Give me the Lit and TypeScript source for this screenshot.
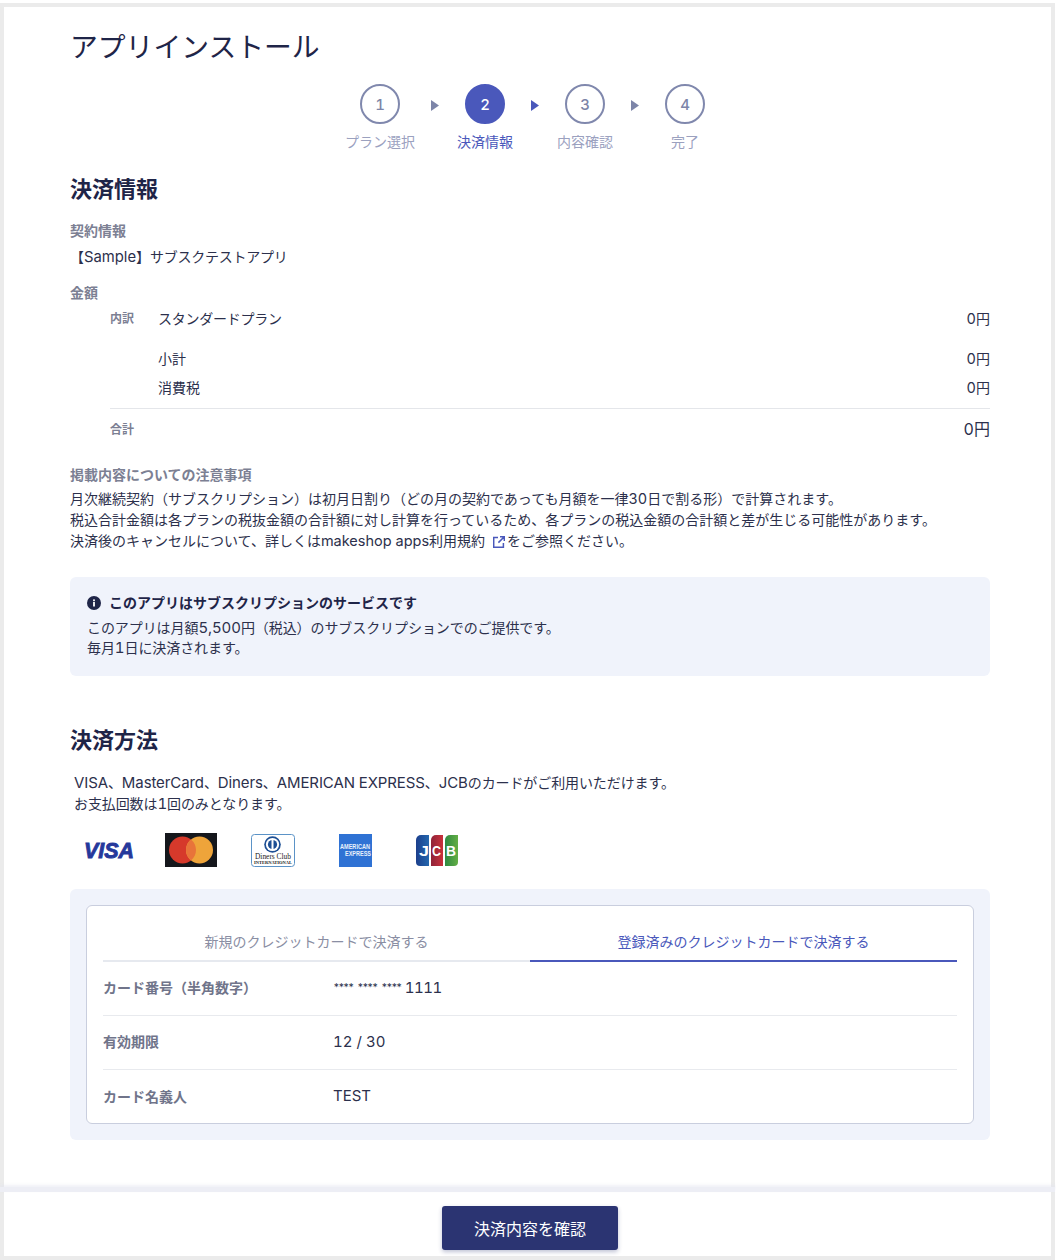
import { LitElement, html, css } from "lit";
import { customElement } from "lit/decorators.js";

const STEPS = [
  { n: "1", label: "プラン選択" },
  { n: "2", label: "決済情報", active: true },
  { n: "3", label: "内容確認" },
  { n: "4", label: "完了" },
];

@customElement("app-root")
export class AppRoot extends LitElement {
  static styles = css`
    :host {
      display: block;
      width: 1056px;
      height: 1260px;
      box-sizing: border-box;
      font-family: Inter, "Noto Sans CJK JP", sans-serif;
      font-variant-numeric: tabular-nums;
      color: #1f2548;
      background: #ffffff;
      overflow: hidden;
    }
    * { box-sizing: border-box; }
    .l { font-size: 15px; }
    .l-s { font-size: 14.5px; }
    .tight { letter-spacing: -.25px; }
    .frame {
      width: 1055px;
      height: 1257px;
      margin-top: 3px;
      border: 4px solid #ebebeb;
      display: flex;
      flex-direction: column;
      background: #fff;
    }
    .main { height: 1185px; padding: 0 61px 0 66px; }
    .foot {
      position: relative;
      height: 64px;
      display: flex;
      justify-content: center;
      padding: 14px 0 0 5px;
    }
    .foot::before {
      content: "";
      position: absolute;
      left: -4px;
      right: -4px;
      top: -5px;
      height: 5px;
      background: #edeef5;
      box-shadow: 0 -2px 3px rgba(225, 227, 240, .5);
    }
    .btn {
      width: 176px;
      height: 44px;
      border-radius: 3px;
      background: #2b3472;
      color: #fff;
      font-size: 16px;
      display: flex;
      align-items: center;
      justify-content: center;
      box-shadow: 0 2px 4px rgba(43, 52, 114, .3);
    }
    h1 {
      margin: 0;
      padding-top: 18px;
      font-size: 27.8px;
      line-height: 44px;
      font-weight: 400;
      color: #1f2548;
    }
    .steps {
      display: flex;
      justify-content: center;
      margin-top: 15px;
      height: 70px;
    }
    .step { width: 56px; display: flex; flex-direction: column; align-items: center; }
    .step.first { width: 66px; }
    .circle {
      width: 40px;
      height: 40px;
      flex: none;
      border-radius: 50%;
      border: 2px solid #8088ad;
      color: #7d85a8;
      font-size: 15px;
      font-weight: 500;
      display: flex;
      align-items: center;
      justify-content: center;
    }
    .step.on .circle { background: #4a58bb; border-color: #4a58bb; color: #fff; }
    .step-label { margin-top: 8px; font-size: 14px; line-height: 20px; color: #9ba1bf; white-space: nowrap; }
    .step.on .step-label { color: #4a58bb; }
    .arrow {
      width: 44px;
      display: flex;
      justify-content: center;
      padding-top: 16px;
    }
    .arrow svg { width: 8px; height: 11px; display: block; }
    h2 {
      margin: 0;
      font-size: 22px;
      line-height: 30px;
      font-weight: 700;
      color: #1f2548;
    }
    .h-first { margin-top: 20px; }
    .label { font-size: 14px; line-height: 20px; font-weight: 700; color: #7c8093; }
    .body { font-size: 14px; line-height: 21px; color: #2c304c; }
    .contract { margin-top: 17px; }
    .contract .body { margin-top: 5px; }
    .contract .l { font-size: 14.8px; }
    .amount { margin-top: 15px; }
    .rows { margin-left: 40px; }
    .row { display: flex; align-items: center; font-size: 14px; color: #2c304c; height: 29px; }
    .row .k { width: 48px; font-size: 12px; font-weight: 700; color: #7c8093; }
    .row .v { margin-left: auto; }
    .row .v .l { font-size: 14.5px; }
    .row.brk { margin-bottom: 11px; }
    .rule { border-top: 1px solid #e4e6ea; margin-top: 7px; }
    .row.total { height: 38px; }
    .row.total .v { font-size: 16px; }
    .row.total .v .l { font-size: 16px; }
    .note { margin-top: 18px; }
    .note .body { margin-top: 3px; }
    .ext { display: inline-block; width: 12px; height: 12px; vertical-align: -2px; margin: 0 2px 0 8px; }
    .info {
      margin-top: 26px;
      height: 99px;
      padding: 15px 17px;
      background: #f0f3fb;
      border-radius: 6px;
    }
    .info-t { display: flex; align-items: center; gap: 8px; font-size: 14px; line-height: 21px; font-weight: 700; color: #1f2548; }
    .info-t svg { width: 14px; height: 14px; display: block; }
    .info .body { line-height: 20px; margin-top: 5px; letter-spacing: -.08px; }
    .pay-h { margin-top: 49px; }
    .pay-t { margin-top: 18px; padding-left: 4px; font-size: 14px; line-height: 20.5px; color: #2c304c; letter-spacing: -.1px; }
    .brands { display: flex; align-items: center; margin-top: 18px; height: 36px; padding-left: 14px; }
    .brands svg { display: block; flex: none; overflow: visible; }
    .m-visa { margin-right: 25px; }
    .m-master { margin-right: 34px; }
    .m-diners { margin-right: 44px; }
    .m-amex { margin-right: 44px; }
    .panel {
      margin-top: 21px;
      padding: 16px;
      height: 251px;
      background: #f0f3fb;
      border-radius: 6px;
    }
    .card {
      height: 219px;
      background: #fff;
      border: 1px solid #c9cede;
      border-radius: 6px;
      padding: 16px 16px 0;
    }
    .tabs { display: grid; grid-template-columns: 1fr 1fr; }
    .tab {
      height: 40px;
      padding-top: 10px;
      text-align: center;
      font-size: 14px;
      line-height: 20px;
      color: #8a8ea3;
      border-bottom: 2px solid #e6e9ef;
    }
    .tab.on { color: #4a58bb; border-bottom-color: #4a58bb; }
    .crow {
      display: flex;
      align-items: center;
      height: 54px;
      padding-bottom: 3px;
      border-bottom: 1px solid #e8eaee;
      font-size: 15px;
      color: #2c304c;
    }
    .crow:last-child { border-bottom: 0; }
    .crow .k { width: 230px; font-size: 14px; font-weight: 700; color: #70748a; }
    .mask { font-size: 10.5px; letter-spacing: -1.9px; word-spacing: 3.5px; margin-right: 4px; }
    .num { letter-spacing: -.5px; }
  `;

  private visa() {
    return html`<svg class="m-visa" width="56" height="20" viewBox="0 0 56 20">
      <text x="0" y="18" font-family="Liberation Sans, sans-serif" font-size="22" font-weight="700" font-style="italic" fill="#25389b" stroke="#25389b" stroke-width=".9" textLength="50" lengthAdjust="spacingAndGlyphs">VISA</text>
    </svg>`;
  }
  private master() {
    return html`<svg class="m-master" width="52" height="34" viewBox="0 0 52 34">
      <rect width="52" height="34" fill="#15171c"/>
      <circle cx="17.5" cy="17" r="13.5" fill="#d6392b"/>
      <circle cx="34.5" cy="17" r="13.5" fill="#eea43a"/>
      <path d="M26 6.51a13.5 13.5 0 0 1 0 20.98a13.5 13.5 0 0 1 0-20.98z" fill="#e8743a"/>
    </svg>`;
  }
  private diners() {
    return html`<svg class="m-diners" width="44" height="33" viewBox="0 0 44 33">
      <rect x=".5" y=".5" width="43" height="32" rx="3" fill="#fff" stroke="#5b93c7"/>
      <circle cx="21.5" cy="10.5" r="8.3" fill="#1d4f94"/>
      <circle cx="21.5" cy="10.5" r="6.6" fill="#fff"/>
      <circle cx="21.5" cy="10.5" r="4.6" fill="#1d4f94"/>
      <rect x="20.5" y="5" width="2" height="11" fill="#fff"/>
      <text x="4" y="25" font-family="Liberation Serif, serif" font-size="9" fill="#222" textLength="36" lengthAdjust="spacingAndGlyphs">Diners Club</text>
      <text x="3" y="30" font-family="Liberation Serif, serif" font-size="5" font-weight="700" fill="#222" textLength="38" lengthAdjust="spacingAndGlyphs">INTERNATIONAL</text>
    </svg>`;
  }
  private amex() {
    return html`<svg class="m-amex" width="33" height="33" viewBox="0 0 33 33">
      <rect width="33" height="33" fill="#2f72d4"/>
      <text x="1" y="15" font-family="Liberation Sans, sans-serif" font-size="6.5" font-weight="700" fill="#e8f0fb" textLength="30" lengthAdjust="spacingAndGlyphs">AMERICAN</text>
      <text x="6" y="22" font-family="Liberation Sans, sans-serif" font-size="6.5" font-weight="700" fill="#e8f0fb" textLength="26" lengthAdjust="spacingAndGlyphs">EXPRESS</text>
    </svg>`;
  }
  private jcb() {
    return html`<svg width="42" height="31" viewBox="0 0 42 31">
      <defs>
        <linearGradient id="jb" x1="0" x2="1" y1="0" y2="0"><stop offset="0" stop-color="#1c3f8c"/><stop offset="1" stop-color="#2467ae"/></linearGradient>
        <linearGradient id="jr" x1="0" x2="1" y1="0" y2="0"><stop offset="0" stop-color="#8f2338"/><stop offset="1" stop-color="#c9313c"/></linearGradient>
        <linearGradient id="jg" x1="0" x2="1" y1="0" y2="0"><stop offset="0" stop-color="#2f8a42"/><stop offset="1" stop-color="#63ae45"/></linearGradient>
      </defs>
      <path d="M5 0h8v31H4a4 4 0 0 1-4-4V5a5 5 0 0 1 5-5z" fill="url(#jb)"/>
      <path d="M20 0h7v31H15V5a5 5 0 0 1 5-5z" fill="url(#jr)"/>
      <path d="M34 0h8v27a4 4 0 0 1-4 4h-9V5a5 5 0 0 1 5-5z" fill="url(#jg)"/>
      <g font-family="Liberation Sans, sans-serif" font-size="14" font-weight="700" fill="#fff">
        <text x="3" y="21" textLength="10" lengthAdjust="spacingAndGlyphs">J</text>
        <text x="16" y="21" textLength="9" lengthAdjust="spacingAndGlyphs">C</text>
        <text x="30" y="21" textLength="10" lengthAdjust="spacingAndGlyphs">B</text>
      </g>
    </svg>`;
  }

  render() {
    const arrow = (on: boolean) => html`<div class="arrow">
      <svg viewBox="0 0 8 11"><path d="M0 0L8 5.5L0 11z" fill=${on ? "#4a58bb" : "#7d85a8"}/></svg>
    </div>`;
    return html`<div class="frame">
      <div class="main">
        <h1>アプリインストール</h1>
        <div class="steps">
          ${STEPS.map(
            (s, i) => html`${i > 0 ? arrow(i === 2) : ""}
              <div class="step ${s.active ? "on" : ""} ${i === 0 ? "first" : ""}">
                <div class="circle">${s.n}</div>
                <div class="step-label">${s.label}</div>
              </div>`
          )}
        </div>
        <h2 class="h-first">決済情報</h2>
        <div class="contract">
          <div class="label">契約情報</div>
          <div class="body">【<span class="l">Sample</span>】<span class="tight">サブスクテストアプリ</span></div>
        </div>
        <div class="amount">
          <div class="label">金額</div>
          <div class="rows">
            <div class="row brk"><span class="k">内訳</span><span class="tight">スタンダードプラン</span><span class="v"><span class="l">0</span>円</span></div>
            <div class="row"><span class="k"></span><span>小計</span><span class="v"><span class="l">0</span>円</span></div>
            <div class="row"><span class="k"></span><span>消費税</span><span class="v"><span class="l">0</span>円</span></div>
            <div class="rule"></div>
            <div class="row total"><span class="k">合計</span><span class="v"><span class="l">0</span>円</span></div>
          </div>
        </div>
        <div class="note">
          <div class="label">掲載内容についての注意事項</div>
          <div class="body">
            月次継続契約（サブスクリプション）は初月日割り（どの月の契約であっても月額を一律<span class="l-s">30</span>日で割る形）で計算されます。<br />
            税込合計金額は各プランの税抜金額の合計額に対し計算を行っているため、各プランの税込金額の合計額と差が生じる可能性があります。<br />
            決済後のキャンセルについて、詳しくは<span class="l-s">makeshop apps</span>利用規約<svg class="ext" viewBox="0 0 12 12" fill="none" stroke="#4a58bb" stroke-width="1.5"><path d="M5 1.6H.7v9.7h9.7V7M7 .7h4.3V5M11.3 .7L5.4 6.6"/></svg>をご参照ください。
          </div>
        </div>
        <div class="info">
          <div class="info-t">
            <svg viewBox="0 0 14 14"><circle cx="7" cy="7" r="7" fill="#1f2548"/><rect x="6.1" y="6" width="1.8" height="4.5" fill="#fff"/><rect x="6.1" y="3.4" width="1.8" height="1.8" fill="#fff"/></svg>
            このアプリはサブスクリプションのサービスです
          </div>
          <div class="body">このアプリは月額<span class="l">5,500</span>円（税込）のサブスクリプションでのご提供です。<br />毎月<span class="l">1</span>日に決済されます。</div>
        </div>
        <h2 class="pay-h">決済方法</h2>
        <div class="pay-t"><span class="l">VISA</span>、<span class="l">MasterCard</span>、<span class="l">Diners</span>、<span class="l">AMERICAN EXPRESS</span>、<span class="l">JCB</span>のカードがご利用いただけます。<br />お支払回数は<span class="l">1</span>回のみとなります。</div>
        <div class="brands">${this.visa()}${this.master()}${this.diners()}${this.amex()}${this.jcb()}</div>
        <div class="panel">
          <div class="card">
            <div class="tabs">
              <div class="tab">新規のクレジットカードで決済する</div>
              <div class="tab on">登録済みのクレジットカードで決済する</div>
            </div>
            <div class="crow"><span class="k">カード番号（半角数字）</span><span class="mask">**** **** ****</span><span class="num">1111</span></div>
            <div class="crow"><span class="k">有効期限</span><span>12 / 30</span></div>
            <div class="crow"><span class="k">カード名義人</span><span>TEST</span></div>
          </div>
        </div>
      </div>
      <div class="foot"><div class="btn">決済内容を確認</div></div>
    </div>`;
  }
}
